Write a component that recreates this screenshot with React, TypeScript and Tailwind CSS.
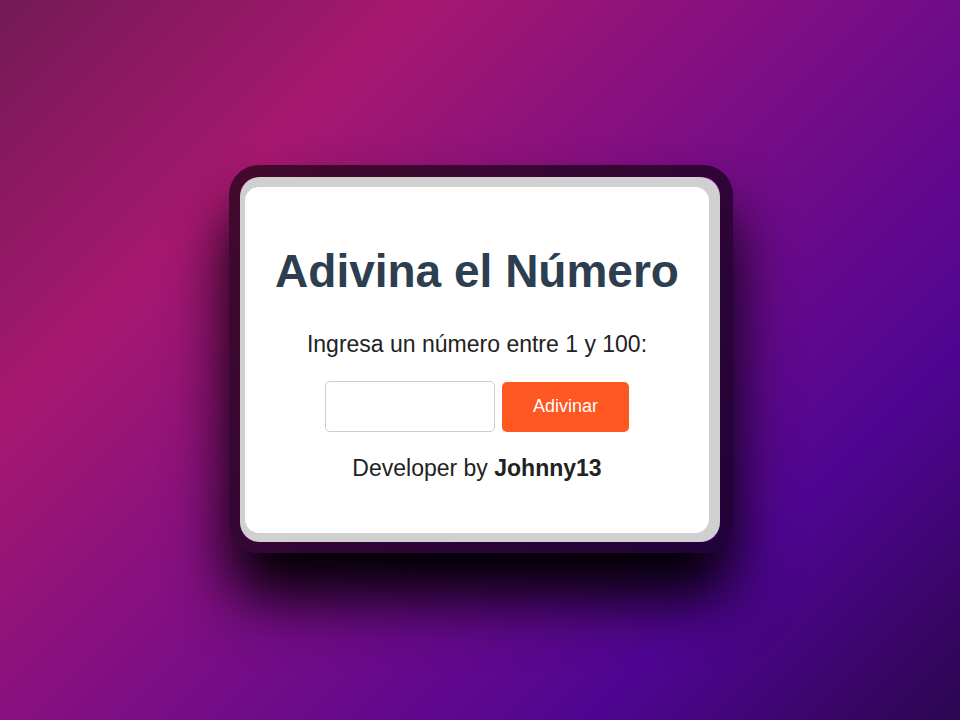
import React from 'react';

const App: React.FC = () => {
  return (
    <div
      className="min-h-screen w-full flex items-center justify-center bg-[linear-gradient(135deg,#731a55_0%,#a6186f_25%,#7c0e85_50%,#4f0592_78%,#2c0650_100%)]"
      style={{ fontFamily: '"Liberation Sans", Arial, sans-serif' }}
    >
      <div className="w-[504px] h-[388px] rounded-[30px] border-t-[12px] border-b-[11px] border-l-[11px] border-r-[13px] border-black/60 shadow-[0_45px_60px_rgba(0,0,0,1)] ml-[2px] mt-[-2px]">
        <div className="h-full w-full rounded-[20px] bg-[#d0d0d0] pt-[10px] pr-[11px] pb-[9px] pl-[5px]">
          <div className="h-full w-full rounded-[14px] bg-white flex flex-col items-center pt-[58px]">
            <h1 className="text-[46px] leading-[53px] font-bold text-[#2c3e50]">Adivina el Número</h1>
            <p className="mt-[33px] text-[23px] leading-[26px] text-[#222]">Ingresa un número entre 1 y 100:</p>
            <div className="mt-[24px] flex items-center gap-[7px]">
              <input
                type="number"
                className="w-[170px] h-[51px] rounded-[5px] border border-[#ccc] bg-white px-2 text-[18px] outline-none"
              />
              <button className="w-[127px] h-[50px] rounded-[5px] bg-[#ff5722] text-white text-[18px]">
                Adivinar
              </button>
            </div>
            <p className="mt-[23px] text-[23px] leading-[26px] text-[#222]">
              Developer by <strong className="font-bold">Johnny13</strong>
            </p>
          </div>
        </div>
      </div>
    </div>
  );
};

export default App;
